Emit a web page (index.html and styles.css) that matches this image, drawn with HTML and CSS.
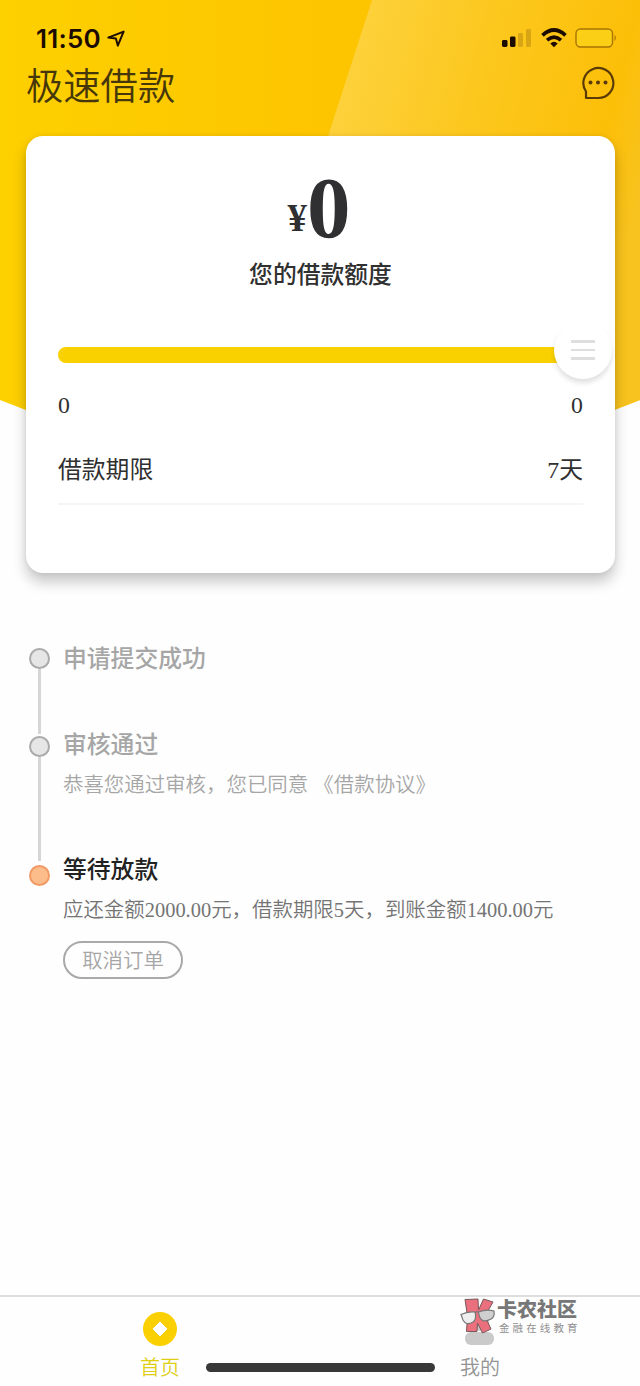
FILE: index.html
```html
<!DOCTYPE html>
<html lang="zh-CN">
<head>
<meta charset="utf-8">
<title>极速借款</title>
<link rel="stylesheet" href="styles.css">
</head>
<body>
<div class="app">
  <svg class="backdrop" viewBox="0 0 640 440" aria-hidden="true">
    <defs>
      <linearGradient id="base" x1="0" y1="0" x2="1" y2="0">
        <stop offset="0" stop-color="#fdd000"/><stop offset="0.6" stop-color="#fdc300"/>
      </linearGradient>
      <linearGradient id="shine" gradientUnits="userSpaceOnUse" x1="335" y1="110" x2="640" y2="190">
        <stop offset="0" stop-color="#fdd13b"/><stop offset="0.45" stop-color="#fcc71c"/><stop offset="0.85" stop-color="#fcbf08"/><stop offset="1" stop-color="#f8c31e"/>
      </linearGradient>
      <clipPath id="curve"><path d="M0 0H640V400Q320 530 0 400Z"/></clipPath>
    </defs>
    <g clip-path="url(#curve)">
      <rect width="640" height="440" fill="url(#base)"/>
      <path d="M372 0H640V440H230Z" fill="url(#shine)"/>
    </g>
  </svg>

  <header class="status">
    <div class="clock">11:50
      <svg class="locate" viewBox="0 0 18 18"><path d="M1.300 7.600 16.600 1.600 10.800 15.600 8.900 8.600Z"/></svg>
    </div>
    <div class="signals">
      <svg width="31" height="20" viewBox="0 0 31 20">
        <rect x="0" y="12" width="5.500" height="7" rx="1.400" fill="#1c0c00"/>
        <rect x="8" y="8.500" width="5.500" height="10.500" rx="1.400" fill="#1c0c00"/>
        <rect x="16" y="5" width="5" height="14" rx="1.400" fill="#d8a514"/>
        <rect x="24" y="1" width="5" height="18" rx="1.400" fill="#d8a514"/>
      </svg>
      <svg width="26" height="20" viewBox="0 0 26 20" fill="none" stroke="#1c0c00">
        <path d="M1.500 7.300Q13-3.100 24.500 7.300" stroke-width="3.800"/>
        <path d="M6 12.200Q13 5.900 20 12.200" stroke-width="3.600"/>
        <path d="M9.300 15.400Q13 12.200 16.700 15.400L13 19.300Z" fill="#1c0c00" stroke="none"/>
      </svg>
      <svg width="42" height="20" viewBox="0 0 42 20">
        <rect x="1" y="1" width="36.500" height="18" rx="4.500" fill="#fbcf16" stroke="#a97405" stroke-width="1.400"/>
        <path d="M39.500 6.800Q42.500 10 39.500 13.200Z" fill="#b67d08"/>
      </svg>
    </div>
  </header>

  <div class="titlebar">
    <h1 class="title">极速借款</h1>
    <svg class="chat" viewBox="0 0 34 34"><path d="M5 32V25.500A15 15 0 1 1 17 32Z"/><circle cx="9.500" cy="16.500" r="2"/><circle cx="17" cy="16.500" r="2"/><circle cx="24.500" cy="16.500" r="2"/></svg>
  </div>

  <section class="card">
    <div class="amount"><span class="yen">¥</span><span class="digit">0</span></div>
    <div class="caption">您的借款额度</div>
    <div class="slider">
      <div class="track"></div>
      <div class="knob"><i></i><i></i><i></i></div>
    </div>
    <div class="range"><span>0</span><span>0</span></div>
    <div class="term"><span>借款期限</span><span>7天</span></div>
  </section>

  <main class="steps">
    <section class="step step-one">
      <div class="rail"><span class="dot"></span><span class="line"></span></div>
      <div class="info"><h2>申请提交成功</h2></div>
    </section>
    <section class="step step-two">
      <div class="rail"><span class="dot"></span><span class="line"></span></div>
      <div class="info"><h2>审核通过</h2><p>恭喜您通过审核，您已同意 《借款协议》</p></div>
    </section>
    <section class="step step-now">
      <div class="rail"><span class="dot"></span></div>
      <div class="info"><h2>等待放款</h2><p>应还金额2000.00元，借款期限5天，到账金额1400.00元</p><button class="cancel">取消订单</button></div>
    </section>
  </main>

  <nav class="tabs">
    <div class="tab active">
      <svg class="coin" viewBox="0 0 34 34"><circle cx="17" cy="17" r="17" fill="#fad000"/><path d="M17 10 24 17 17 24 10 17Z" fill="#fff" stroke="#fff" stroke-linejoin="round"/></svg>
      <span>首页</span>
    </div>
    <div class="tab">
      <svg class="person" viewBox="0 0 34 34"><circle cx="17" cy="10" r="9" fill="#cacaca"/><rect x="2" y="20" width="29" height="13" rx="6" fill="#cacaca"/></svg>
      <span>我的</span>
    </div>
    <div class="home-bar"></div>
    <div class="brand">
      <svg class="brand-mark" viewBox="0 0 36 37">
        <path d="M5 1.500 18 1 18.500 12 23.500 1 33 4 25 18 31 31 22.500 35 17.500 25 17 33.500H6.500L7.500 18Z" fill="#e9707c" stroke="#77595b"/>
        <g stroke="#777" stroke-width="1.200"><path d="M1 16.500Q8 13 15 14Q17 21 13 24Q6 28 3 22Z" fill="#eee"/><path d="M18.500 14Q26 11 34 13Q35 19 31 21Q20 27 18.500 14Z" fill="#cfcfcf"/><path d="M15 15Q17 13 18.500 14" fill="none"/></g>
      </svg>
      <div class="brand-copy"><strong>卡农社区</strong><small>金融在线教育</small></div>
    </div>
  </nav>
</div>
</body>
</html>
```
FILE: styles.css
```css
* { box-sizing: border-box; }
body { margin: 0; background: #fefefe; font-family: "Liberation Serif", "Noto Sans CJK SC", sans-serif; color: #303030; }
h1, h2, p { margin: 0; font-weight: 400; }
svg { display: block; flex: none; }
.app { position: relative; height: 1386px; display: flex; flex-direction: column; overflow: hidden; isolation: isolate; }
.backdrop { position: absolute; z-index: -1; top: 0; left: 0; width: 640px; height: 440px; }

.status { height: 62px; padding: 16px 23px 0 36px; display: flex; justify-content: space-between; align-items: flex-start; }
.clock { display: flex; align-items: center; gap: 6px; height: 46px; font: 600 26px/46px Inter, sans-serif; letter-spacing: 0.2px; color: #1c0c00; }
.locate { width: 18px; height: 18px; fill: none; stroke: #1c0c00; stroke-width: 2; stroke-linejoin: round; }
.signals { display: flex; gap: 8px; padding-top: 12px; }

.titlebar { height: 46px; padding: 0 25px 0 26px; display: flex; justify-content: space-between; align-items: center; }
.title { padding-top: 5px; font-size: 37.3px; line-height: 46px; font-weight: 350; color: #46370a; }
.chat { width: 34px; height: 34px; margin-bottom: 4px; fill: none; stroke: #5a3b05; stroke-width: 2.2; stroke-linejoin: round; }
.chat circle { fill: #5a3b05; stroke: none; }

.card { height: 437px; flex: none; margin: 28px 25px 0 26px; padding: 38px 32px 0; background: #fff; border-radius: 17px; box-shadow: 0 9px 14px rgba(0,0,0,.22), 0 0 5px rgba(0,0,0,.08); display: flex; flex-direction: column; }
.amount { height: 72px; display: flex; justify-content: center; align-items: flex-end; padding-right: 3px; font-weight: 700; color: #303033; }
.yen { font-size: 39px; line-height: 42px; padding-bottom: 7px; }
.digit { font-size: 87px; line-height: 76px; }
.caption { height: 34px; margin-top: 12px; font-size: 23.8px; line-height: 34px; font-weight: 500; text-align: center; }
.slider { position: relative; height: 58px; margin-top: 28px; display: flex; align-items: center; }
.track { width: 510px; height: 16px; border-radius: 8px; background: #fad100; margin-top: 12px; }
.knob { position: absolute; right: -29px; top: 1px; width: 58px; height: 58px; border-radius: 50%; background: #fff; box-shadow: 0 4px 5px rgba(0,0,0,.12); display: flex; flex-direction: column; gap: 6px; align-items: center; justify-content: center; }
.knob i { width: 24px; height: 2.500px; background: #dedede; }
.range, .term { display: flex; justify-content: space-between; font-size: 23.8px; }
.range { height: 34px; line-height: 34px; margin-top: 10px; }
.term { height: 54px; margin-top: 29px; line-height: 39px; border-bottom: 2px solid #f5f5f5; }

.steps { padding: 68px 26px 0 29px; flex: 1; }
.step { display: flex; gap: 13px; color: #a6a6a6; }
.step-one { height: 86px; }
.step-two { height: 125px; }
.rail { width: 21px; flex: none; display: flex; flex-direction: column; align-items: center; padding-top: 7px; }
.dot { width: 21px; height: 21px; flex: none; border-radius: 50%; border: 2px solid #aaa; background: #e6e6e6; }
.line { width: 3px; flex: none; background: #d6d6d6; }
.step-one .line { height: 65px; }
.step-two .rail { padding-top: 9px; }
.step-two .line { height: 104px; }
.step-now .rail { padding-top: 13px; }
.step-now .dot { background: #fdbd8b; border-color: #f19a64; }
.info { padding-top: 1px; }
.info h2 { font-size: 23.8px; line-height: 34px; font-weight: 500; }
.info p { font-size: 20.45px; line-height: 30px; margin-top: 8px; font-weight: 350; white-space: nowrap; }
.step-now h2 { color: #222; }
.step-now p { color: #747474; }
.cancel { display: block; width: 120px; height: 38px; margin-top: 16px; padding: 0 0 2px; border: 2px solid #a9a9a9; border-radius: 19px; background: transparent; font: 350 20.45px/30px "Noto Sans CJK SC", sans-serif; color: #a6a6a6; }

.tabs { position: relative; height: 91px; flex: none; border-top: 2px solid #dedede; display: grid; grid-template-columns: 1fr 1fr; }
.tab { display: flex; flex-direction: column; align-items: center; padding-top: 15px; font-size: 20px; line-height: 28px; font-weight: 350; color: #939393; }
.tab svg { width: 34px; height: 34px; margin-bottom: 8px; }
.active { color: #dfcf12; }
.home-bar { position: absolute; left: 206px; top: 66px; width: 229px; height: 9px; border-radius: 5px; background: #383838; }
.brand { position: absolute; left: 460px; top: 1px; display: flex; gap: 1px; color: #777; font-family: "Noto Sans CJK SC", sans-serif; }
.brand-mark { width: 36px; height: 37px; }
.brand-copy { display: flex; flex-direction: column; }
.brand-copy strong { font-size: 20px; line-height: 22px; font-weight: 900; }
.brand-copy small { margin-left: 2px; font-size: 10.500px; line-height: 15px; letter-spacing: 3.100px; white-space: nowrap; color: #909090; }
```
